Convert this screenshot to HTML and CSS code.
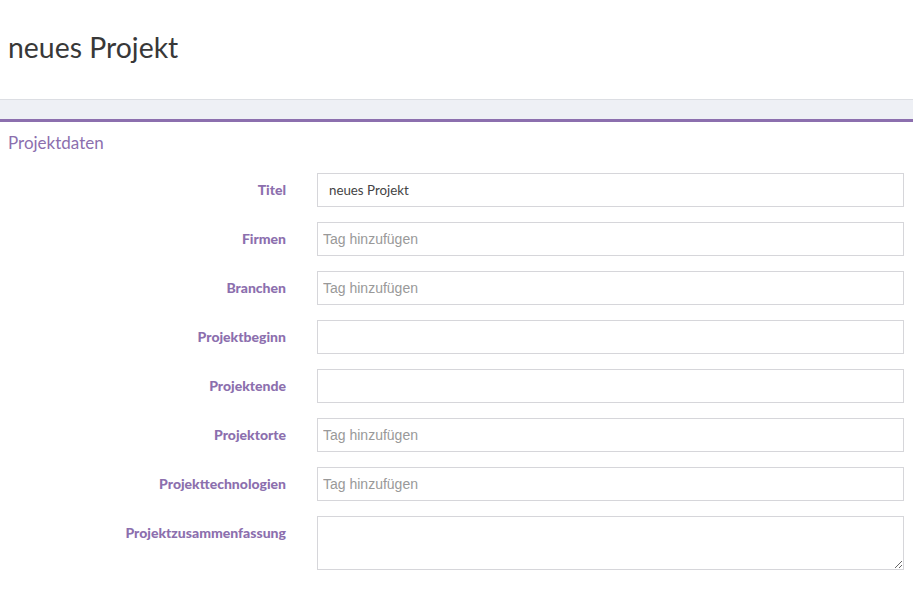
FILE: index.html
```html
<!DOCTYPE html>
<html lang="de">
<head>
<meta charset="utf-8">
<title>neues Projekt</title>
<link rel="stylesheet" href="styles.css">
</head>
<body>
<header class="page-header">
  <h1 class="page-title">neues Projekt</h1>
</header>
<div class="band"></div>
<section class="panel">
  <h2 class="panel-title">Projektdaten</h2>
  <form class="form">
    <label class="label">Titel</label>
    <input class="field field-text" type="text" value="neues Projekt">
    <label class="label">Firmen</label>
    <input class="field field-tag" type="text" placeholder="Tag hinzufügen">
    <label class="label">Branchen</label>
    <input class="field field-tag" type="text" placeholder="Tag hinzufügen">
    <label class="label">Projektbeginn</label>
    <input class="field field-text" type="text">
    <label class="label">Projektende</label>
    <input class="field field-text" type="text">
    <label class="label">Projektorte</label>
    <input class="field field-tag" type="text" placeholder="Tag hinzufügen">
    <label class="label">Projekttechnologien</label>
    <input class="field field-tag" type="text" placeholder="Tag hinzufügen">
    <label class="label">Projektzusammenfassung</label>
    <textarea class="field field-area"></textarea>
  </form>
</section>
</body>
</html>
```

FILE: styles.css
```css
* { box-sizing: border-box; }
html, body { margin: 0; padding: 0; background: #fff; }
body { font-family: Lato, "Open Sans", sans-serif; color: #333; }

.page-header { height: 99px; padding: 30px 8px 0; }
.page-title {
  margin: 0;
  font-weight: 400;
  font-size: 28.4px;
  line-height: 34px;
  color: #383838;
}

.band {
  height: 23px;
  background: #eef0f5;
  border-top: 1px solid #dcdee3;
  border-bottom: 3px solid #8c6fae;
}

.panel { padding: 10px 9px 0 8px; }
.panel-title {
  margin: 0;
  font-weight: 400;
  font-size: 17px;
  line-height: 22px;
  color: #8c6fae;
}

.form {
  margin-top: 19px;
  display: grid;
  grid-template-columns: 278px 1fr;
  column-gap: 31px;
  row-gap: 15px;
}

.label {
  text-align: right;
  font-weight: 900;
  font-size: 14px;
  line-height: 18px;
  padding-top: 8px;
  color: #8c6fae;
}

.field {
  height: 34px;
  border: 1px solid #d6d6da;
  border-radius: 0;
  background: #fff;
  margin: 0;
  outline: none;
}
.field-text {
  padding: 0 11px;
  font-family: Lato, "Open Sans", sans-serif;
  font-size: 13.3px;
  color: #444;
}
.field-tag {
  padding: 0 5px;
  font-family: "Liberation Sans", Arial, sans-serif;
  font-size: 14px;
  color: #333;
}
.field-tag::placeholder { color: #999; }
.field-area {
  height: 54px;
  resize: vertical;
  padding: 6px 11px;
  font-family: Lato, sans-serif;
  font-size: 13px;
}
```
